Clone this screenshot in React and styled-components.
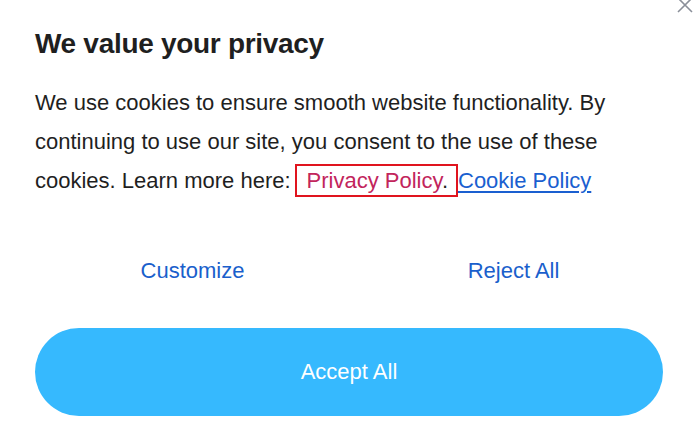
import React from 'react';
import styled, { createGlobalStyle } from 'styled-components';

const Global = createGlobalStyle`
  html, body {
    margin: 0;
    padding: 0;
    background: #fff;
  }
  body {
    font-family: "Liberation Sans", Arial, sans-serif;
  }
`;

const Dialog = styled.div`
  position: relative;
  width: 700px;
  height: 439px;
  box-sizing: border-box;
  padding: 27px 37px 0 35px;
  background: #fff;
  overflow: hidden;
`;

const CloseButton = styled.button`
  position: absolute;
  top: -5px;
  right: 5px;
  width: 20px;
  height: 20px;
  padding: 0;
  border: none;
  background: none;
  cursor: pointer;
`;

const Title = styled.h2`
  margin: 0;
  font-size: 28px;
  font-weight: 700;
  line-height: 34px;
  color: #1f1f1f;
  letter-spacing: -0.3px;
`;

const Body = styled.p`
  margin: 22px 0 0;
  font-size: 22px;
  line-height: 39px;
  color: #1f1f1f;
`;

const FocusBox = styled.span`
  outline: 2px solid #e0141e;
  outline-offset: 2px;
  padding: 0 6px 0 8px;
  margin-left: 8px;
`;

const PolicyLink = styled.a`
  color: #c2255c;
  text-decoration: none;
`;

const TextLink = styled.a`
  color: #1a5fd0;
  text-decoration: underline;
  text-underline-offset: 3px;
  margin-left: 4px;
`;

const Actions = styled.div`
  display: grid;
  grid-template-columns: 1fr 1fr;
  margin-top: 50px;
  margin-left: -3px;
  margin-right: -11px;
`;

const TextButton = styled.button`
  border: none;
  background: none;
  font-family: inherit;
  font-size: 22px;
  color: #1a5fcc;
  padding: 8px 0;
  cursor: pointer;
`;

const PrimaryButton = styled.button`
  display: block;
  width: 100%;
  height: 88px;
  margin-top: 36px;
  border: none;
  border-radius: 44px;
  background: #36b9fe;
  color: #fff;
  font-family: inherit;
  font-size: 22px;
  cursor: pointer;
`;

export default function App() {
  return (
    <>
      <Global />
      <Dialog>
        <CloseButton aria-label="Close">
          <svg width="20" height="20" viewBox="0 0 20 20">
            <path d="M3 3 L17 17 M17 3 L3 17" stroke="#8a8f99" strokeWidth="1.6" fill="none" />
          </svg>
        </CloseButton>
        <Title>We value your privacy</Title>
        <Body>
          We use cookies to ensure smooth website functionality. By continuing to use our site, you consent to the use of these cookies. Learn more here:
          <FocusBox>
            <PolicyLink href="#">Privacy Policy</PolicyLink>.
          </FocusBox>
          <TextLink href="#">Cookie Policy</TextLink>
        </Body>
        <Actions>
          <TextButton>Customize</TextButton>
          <TextButton>Reject All</TextButton>
        </Actions>
        <PrimaryButton>Accept All</PrimaryButton>
      </Dialog>
    </>
  );
}
